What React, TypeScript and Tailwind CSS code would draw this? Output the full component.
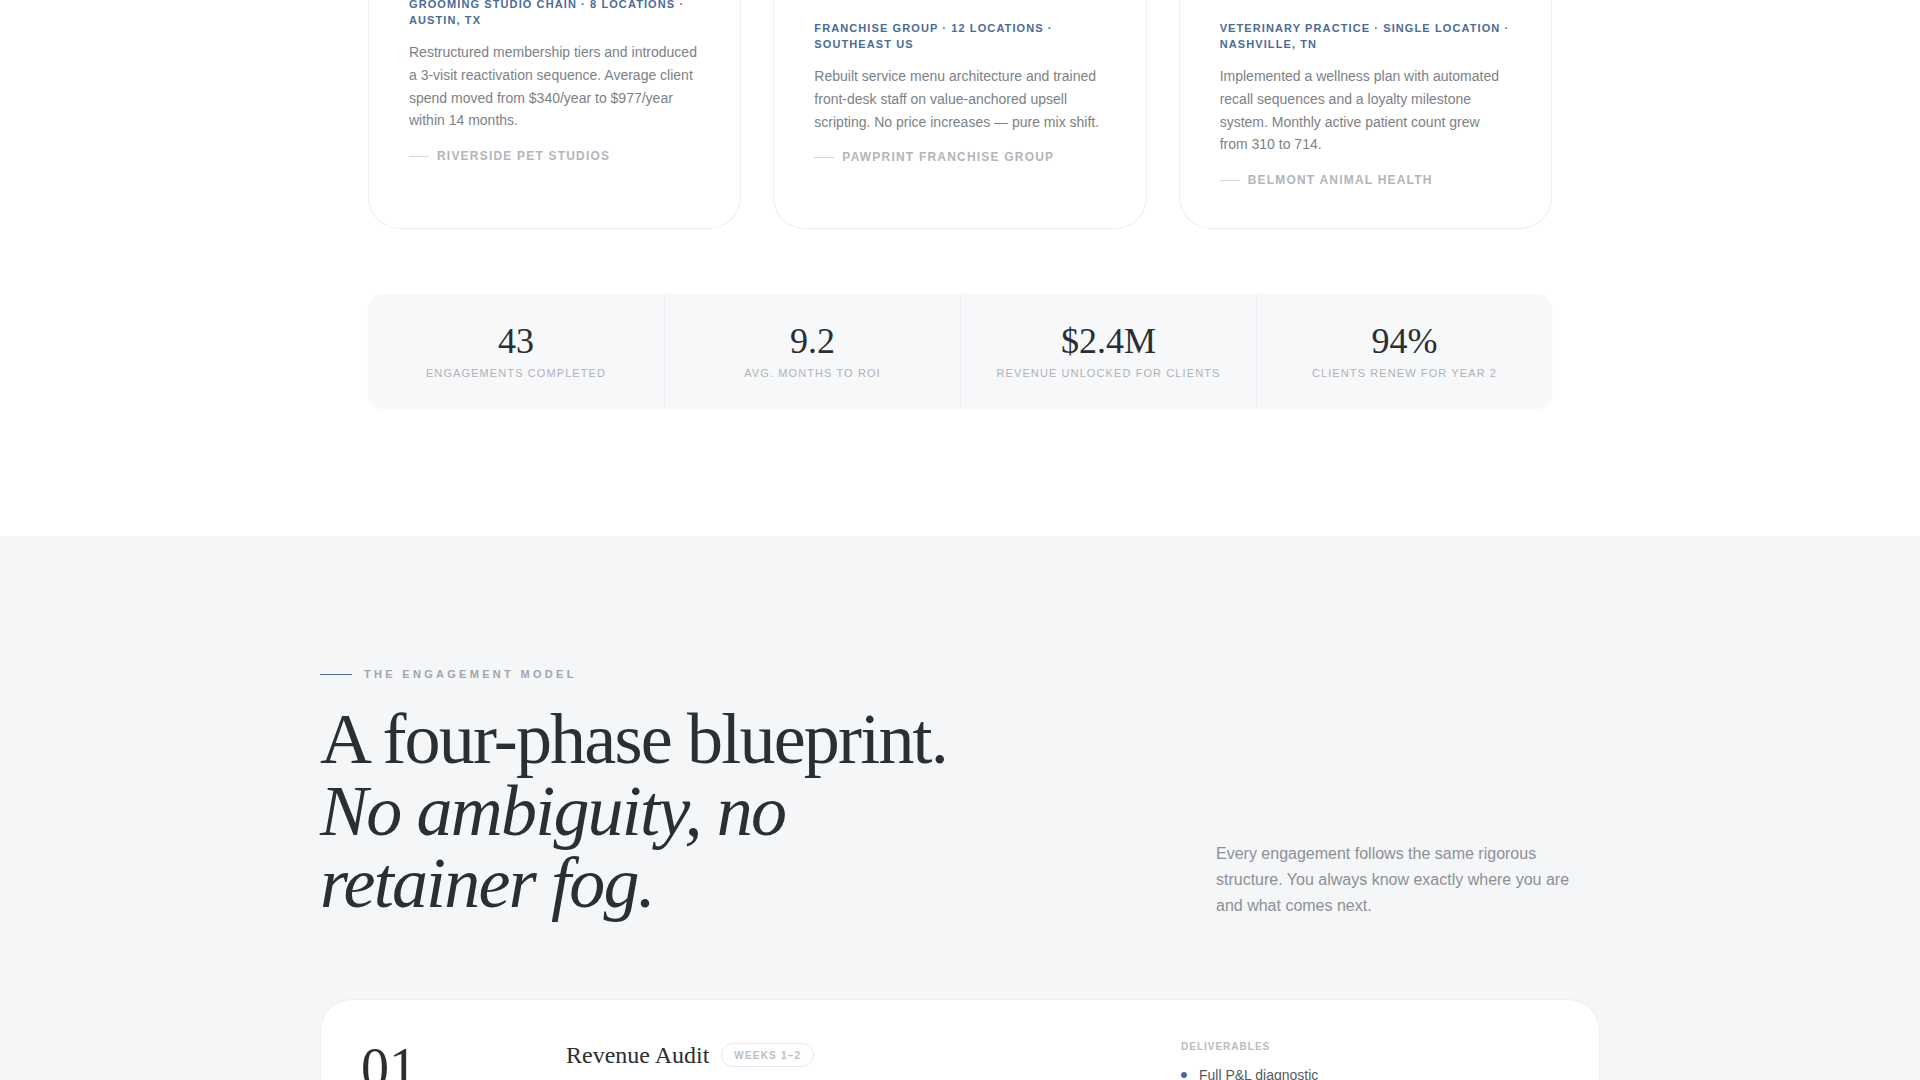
import { type ReactNode } from "react";

type CaseStudy = {
  label: string;
  body: string;
  client: string;
  lift?: boolean;
};

const cases: CaseStudy[] = [
  {
    label: "Grooming studio chain · 8 locations · Austin, TX",
    body: "Restructured membership tiers and introduced a 3-visit reactivation sequence. Average client spend moved from $340/year to $977/year within 14 months.",
    client: "Riverside Pet Studios",
    lift: true,
  },
  {
    label: "Franchise group · 12 locations · Southeast US",
    body: "Rebuilt service menu architecture and trained front-desk staff on value-anchored upsell scripting. No price increases — pure mix shift.",
    client: "Pawprint Franchise Group",
  },
  {
    label: "Veterinary practice · Single location · Nashville, TN",
    body: "Implemented a wellness plan with automated recall sequences and a loyalty milestone system. Monthly active patient count grew from 310 to 714.",
    client: "Belmont Animal Health",
  },
];

const stats = [
  { value: "43", label: "Engagements completed" },
  { value: "9.2", label: "Avg. months to ROI" },
  { value: "$2.4M", label: "Revenue unlocked for clients" },
  { value: "94%", label: "Clients renew for year 2" },
];

const deliverables = ["Full P&L diagnostic", "Service mix analysis", "Client retention map"];

function Eyebrow({ children }: { children: ReactNode }) {
  return (
    <div className="flex items-center gap-3">
      <span className="h-px w-8 bg-[#4a6b9a]" />
      <span className="text-[11px] font-bold uppercase leading-4 tracking-[0.3em] text-[#a0a5ab]">
        {children}
      </span>
    </div>
  );
}

function CaseCard({ item }: { item: CaseStudy }) {
  return (
    <div className="rounded-b-[32px] border-x border-b border-[#eceef1] bg-white px-10 pb-10 pt-5">
      <div className={item.lift ? "-mt-6" : ""}>
        <p className="text-[11px] font-bold uppercase leading-4 tracking-[0.1em] text-[#4a6b9a]">
          {item.label}
        </p>
        <p className="mt-[13px] text-sm leading-relaxed text-[#7d8186]">{item.body}</p>
        <div className="mt-4 flex items-center gap-2">
          <span className="h-px w-5 bg-[#d6d8db]" />
          <span className="text-xs font-bold uppercase leading-4 tracking-[0.1em] text-[#b2b5b9]">
            {item.client}
          </span>
        </div>
      </div>
    </div>
  );
}

export default function App() {
  return (
    <div className="min-h-screen bg-white font-['Liberation_Sans',Arial,sans-serif]">
      {/* Results: case studies + numbers */}
      <section className="bg-white pb-32">
        <div className="mx-auto max-w-[1184px]">
          <div className="grid grid-cols-3 gap-8">
            {cases.map((c) => (
              <CaseCard key={c.client} item={c} />
            ))}
          </div>

          <div className="mt-[65px] grid grid-cols-4 rounded-2xl bg-[#f7f8fa] shadow-[0_1px_3px_rgba(15,23,42,0.04)]">
            {stats.map((s, i) => (
              <div
                key={s.label}
                className={`flex flex-col items-center pb-[27px] pt-[29px] ${i > 0 ? "border-l border-[#eceef1]" : ""}`}
              >
                <span className="font-['Liberation_Serif','Times_New_Roman',serif] text-[36px] leading-none text-[#2a2f33]">
                  {s.value}
                </span>
                <span className="mt-1.5 text-[11px] uppercase leading-4 tracking-[0.1em] text-[#aeb2b7]">
                  {s.label}
                </span>
              </div>
            ))}
          </div>
        </div>
      </section>

      {/* Engagement model */}
      <section className="bg-[#f5f6f8] pb-24 pt-[130px]">
        <div className="mx-auto max-w-7xl">
          <Eyebrow>The engagement model</Eyebrow>

          <div className="mt-[21px] flex items-end justify-between">
            <h2 className="max-w-2xl font-['Liberation_Serif','Times_New_Roman',serif] text-[72px] leading-none tracking-tight text-[#2a2f33]">
              A four-phase blueprint.
              <br />
              <em>No ambiguity, no retainer fog.</em>
            </h2>
            <p className="max-w-sm text-base leading-relaxed text-[#8b9096]">
              Every engagement follows the same rigorous structure. You always know exactly where you are
              and what comes next.
            </p>
          </div>

          <div className="mt-20 rounded-[32px] border border-[#eceef1] bg-white p-10">
            <div className="grid grid-cols-[165px_1fr_378px] gap-10">
              <span className="font-['Liberation_Serif','Times_New_Roman',serif] text-[56px] leading-none text-[#2a2f33]">
                01
              </span>

              <div>
                <div className="flex items-center gap-3">
                  <h3 className="font-['Liberation_Serif','Times_New_Roman',serif] text-2xl leading-[30px] text-[#2a2f33]">
                    Revenue Audit
                  </h3>
                  <span className="flex h-6 items-center rounded-full border border-[#e6e8eb] px-3 text-[10px] font-bold uppercase tracking-[0.12em] text-[#babec2]">
                    Weeks 1–2
                  </span>
                </div>
                <p className="mt-3 text-sm leading-relaxed text-[#7d8186]">
                  We pull every number that matters and map where revenue is leaking.
                </p>
              </div>

              <div>
                <p className="text-[10px] font-bold uppercase leading-[14px] tracking-[0.1em] text-[#b8bcc0]">
                  Deliverables
                </p>
                <ul className="mt-2.5">
                  {deliverables.map((d) => (
                    <li key={d} className="flex items-center gap-3 text-sm leading-relaxed text-[#555a60]">
                      <span className="h-1.5 w-1.5 shrink-0 rounded-full bg-[#4a6b9a]" />
                      {d}
                    </li>
                  ))}
                </ul>
              </div>
            </div>
          </div>
        </div>
      </section>
    </div>
  );
}
